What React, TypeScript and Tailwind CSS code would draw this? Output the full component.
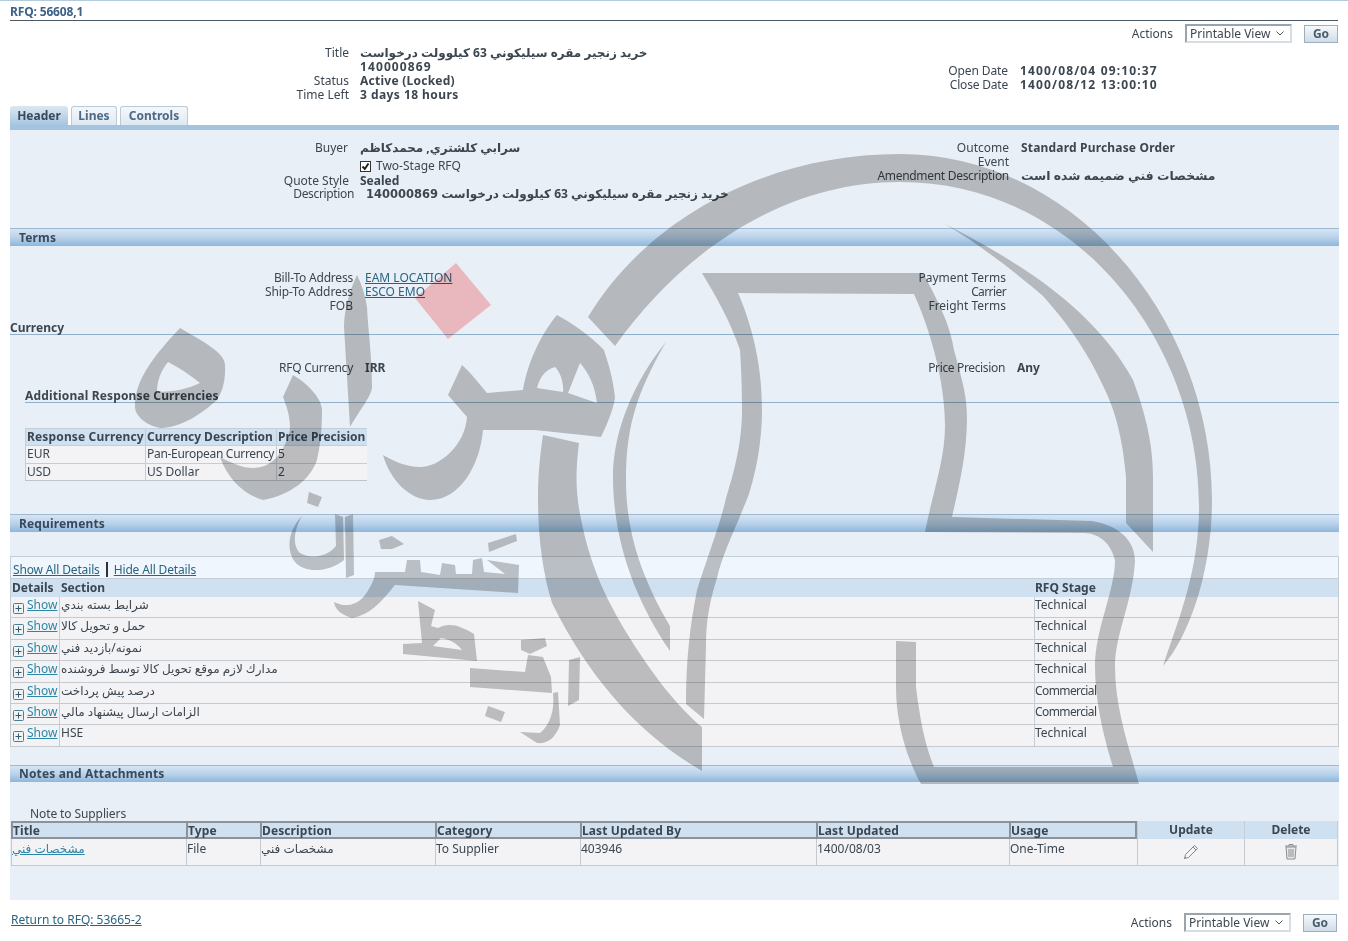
import React from 'react';

const detailRows = [
  { section: 'شرايط بسته بندي', stage: 'Technical' },
  { section: 'حمل و تحويل كالا', stage: 'Technical' },
  { section: 'نمونه/بازديد فني', stage: 'Technical' },
  { section: 'مدارك لازم موقع تحويل كالا توسط فروشنده', stage: 'Technical' },
  { section: 'درصد پيش پرداخت', stage: 'Commercial' },
  { section: 'الزامات ارسال پيشنهاد مالي', stage: 'Commercial' },
  { section: 'HSE', stage: 'Technical' },
];

function ActionBar({ className }: { className: string }) {
  return (
    <div className={`flex items-center ${className}`}>
      <span className="mr-[12px]">Actions</span>
      <div className="relative h-[19px] w-[107px] border-2 border-t-[#9aa4ac] border-l-[#9aa4ac] border-r-[#d8dde2] border-b-[#d8dde2] bg-white">
        <select className="h-full w-full appearance-none bg-transparent pl-[3px] text-[12px] leading-[15px] outline-none">
          <option>Printable View</option>
        </select>
        <svg className="pointer-events-none absolute right-[6px] top-[5px]" width="8" height="5" viewBox="0 0 8 5" fill="none" stroke="#555" strokeWidth="1">
          <path d="M0.5 0.5 L4 4 L7.5 0.5" />
        </svg>
      </div>
      <button className="ml-[12px] h-[18px] w-[34px] border border-[#9db0c0] bg-linear-to-b from-[#f6f9fc] to-[#cfdce8] text-[12px] font-bold leading-[15px] text-[#4a5c6c]">
        Go
      </button>
    </div>
  );
}

function SectionBar({ title, className }: { title: string; className?: string }) {
  return (
    <div className={`border-t border-[#9dbad2] bg-linear-to-b from-[#d6e5f4] via-[#b9d2ea] to-[#8eb7dc] pl-[9px] font-bold tracking-[0.15px] text-[#39495a] ${className ?? ''}`}>
      {title}
    </div>
  );
}

function PlusBox() {
  return (
    <svg className="mt-[5px] shrink-0" width="11" height="11" viewBox="0 0 11 11" fill="#eef3f6" stroke="#4d7f94" strokeWidth="1">
      <rect x="0.5" y="0.5" width="10" height="10" rx="1" />
      <path d="M2.5 5.5 H8.5 M5.5 2.5 V8.5" stroke="#39596b" />
    </svg>
  );
}

function Watermark() {
  return (
    <svg className="pointer-events-none absolute left-0 top-0 mix-blend-multiply" width="1348" height="941" viewBox="0 0 1348 941">
      <g fill="#c6c6c5">
        {/* outer ring */}
        <path d="M588 317 C650 215 770 154 900 154 C1075 154 1212 320 1212 500 C1212 570 1190 635 1163 666 C1180 615 1199 570 1199 506 C1199 340 1075 182 900 182 C780 182 680 255 615 346 Z" />
        {/* thin right crescent */}
        <path d="M945 224 C1040 272 1100 320 1133 380 C1148 420 1153 450 1153 477 L1153 552 L1126 523 L1126 477 C1122 430 1112 405 1106 392 C1085 345 1060 315 1043 296 C1015 272 980 245 945 224 Z" />
        {/* ribbon */}
        <path d="M702 273 L923 273 C940 305 950 325 954 350 C962 380 967 395 967 418 C967 455 958 490 952 517 L1092 521 C1118 525 1135 540 1135 561 C1133 600 1115 635 1115 666 C1115 710 1130 750 1139 784 L921 784 C905 755 896 720 896 687 L896 641 L916 642 L916 687 C920 720 925 745 934 767 L1113 767 C1103 735 1095 700 1095 666 C1095 630 1115 590 1115 561 C1112 545 1100 533 1084 533 L925 532 C932 495 945 460 945 426 C945 380 930 330 914 294 L738 293 C752 325 762 365 762 409 C762 445 755 475 749 494 C735 530 722 555 717 578 C710 600 706 620 706 645 L704 719 L686 704 C686 660 690 625 697 590 C708 555 720 525 726 498 C738 460 742 435 742 409 C742 385 741 365 740 350 C730 320 715 295 702 273 Z" />
        {/* big left crescent */}
        <path d="M543 435 L579 443 C575 475 576 495 581 519 C590 565 605 595 619 620 C645 665 675 705 702 727 L702 771 C640 735 590 680 552 603 C542 570 538 535 538 498 C538 475 540 455 543 435 Z" />
        {/* thin inner crescent */}
        <path d="M666 342 C635 395 626 430 626 480 C626 530 640 575 670 626 L670 651 C635 600 613 540 613 477 C613 430 635 380 666 342 Z" />
        {/* logo lettering */}
        <path fillRule="evenodd" d="M180 328 C200 340 225 352 225 365 C226 385 220 395 217 400 C195 420 175 428 160 428 C145 425 135 415 135 407 C135 385 145 365 180 328 Z M168 362 C160 372 157 382 157 392 C175 392 190 388 200 383 C190 375 180 368 168 362 Z" />
        <path d="M357 275 C350 290 344 310 344 327 L350 427 C360 410 372 395 372 387 C372 355 368 330 367 307 C365 295 362 285 357 275 Z" />
        <path d="M293 375 C310 385 322 400 322 410 C322 440 318 455 317 460 C310 480 290 495 263 500 C245 495 228 480 220 457 C235 465 245 468 253 468 C265 468 272 462 277 457 C286 445 290 435 290 427 C290 415 286 405 283 397 Z" />
        <path d="M309 492 L322 497 L318 507 L307 503 Z" />
        <path fillRule="evenodd" d="M462 365 L448 395 L467 417 C465 445 440 467 420 467 C405 467 392 460 383 455 C390 480 410 500 430 500 C460 500 480 465 483 430 L535 430 L601 437 C612 415 615 400 615 397 C612 370 605 355 604 350 C590 335 570 322 557 315 C540 335 527 365 523 390 L487 393 C478 382 470 372 462 365 Z M555 367 C545 370 540 377 537 388 L563 392 C564 382 560 372 555 367 Z M580 363 L568 393 L597 403 C595 385 588 372 580 363 Z" />
        <path d="M456 263 L491 305 L448 339 L415 298 Z" fill="#ffc5c5" />
        {/* gostaran */}
        <path d="M302 516 C294 530 292 545 300 553 C312 560 328 556 336 546 L335 514 L343 517 L344 560 C330 572 305 574 295 562 C286 550 288 530 302 516 Z" />
        <path d="M345 517 L353 514 L354 575 L346 578 Z" />
        <path d="M375 572 L405 572 L407 560 L420 560 L421 572 L440 575 L442 563 L455 565 L456 574 L472 574 L473 560 L482 558 L484 572 L505 574 L487 560 L519 565 L518 593 L395 585 C385 597 372 615 352 618 C342 615 335 610 334 602 C345 608 358 605 365 595 C372 585 375 578 375 572 Z" />
        <path d="M488 543 L516 534 L517 541 L489 552 Z" />
        <path d="M379 540 L392 536 L404 544 L392 549 L381 549 Z" />
        {/* ertebat */}
        <path fillRule="evenodd" d="M418 601 L435 610 L431 626 L438 628 C448 622 460 625 474 634 L477 661 L403 654 L403 644 L422 643 Z M441 638 L433 646 L462 650 C456 642 448 639 441 638 Z" />
        <path d="M470 668 L525 672 L528 655 L543 657 L551 677 L552 693 L470 687 Z" />
        <path d="M521 640 L545 638 L547 646 L530 654 L521 650 Z" />
        <path d="M569 660 L580 657 L579 700 L568 706 Z" />
        <path d="M553 693 L558 692 L560 725 C555 740 545 744 537 743 L520 732 L540 733 C550 725 555 710 553 693 Z" />
        <path d="M488 706 L505 712 L501 722 L485 716 Z" />
      </g>
    </svg>
  );
}

export default function App() {
  return (
    <div
      className="relative h-[941px] w-[1348px] overflow-hidden bg-white text-[12px] leading-[14px] text-[#3c4650]"
      style={{ fontFamily: '"Noto Sans", "DejaVu Sans", sans-serif' }}
    >
      <div className="h-[1px] bg-[#b4cbdb]" />

      {/* Page header */}
      <div className="mx-[10px] h-[20px] border-b border-[#4c5a68] pt-[4px] font-bold tracking-[-0.15px] text-[#3d6288]">RFQ: 56608,1</div>
      <ActionBar className="mt-[3px] h-[19px] justify-end pr-[10px]" />

      <div className="mt-[2px] flex h-[61px]">
        <div className="grid w-[680px] grid-cols-[349px_auto] content-start gap-x-[11px] pt-[1px]">
          <div className="text-right">Title</div>
          <div className="font-bold">
            <div>خريد زنجير مقره سيليكوني 63 كيلوولت درخواست</div>
            <div className="tracking-[1.1px]">140000869</div>
          </div>
          <div className="text-right">Status</div>
          <div className="font-bold tracking-[0.25px]">Active (Locked)</div>
          <div className="text-right">Time Left</div>
          <div className="font-bold tracking-[0.45px]">3 days 18 hours</div>
        </div>
        <div className="mt-[19px] grid grid-cols-[328px_auto] content-start gap-x-[12px]">
          <div className="text-right tracking-[-0.1px]">Open Date</div>
          <div className="font-bold tracking-[1.15px]">1400/08/04 09:10:37</div>
          <div className="text-right tracking-[-0.2px]">Close Date</div>
          <div className="font-bold tracking-[1.15px]">1400/08/12 13:00:10</div>
        </div>
      </div>

      {/* Tabs */}
      <div className="flex h-[19px] gap-[3px] pl-[10px] font-bold leading-[18px]">
        <div className="w-[58px] rounded-t-[3px] bg-linear-to-b from-[#dbe8f3] to-[#a6c6e0] text-center leading-[20px] text-[#39495a]">Header</div>
        <div className="w-[46px] rounded-t-[3px] border border-b-0 border-[#bccad6] bg-linear-to-b from-[#f4f8fb] to-[#dfe9f2] text-center text-[#4a6a88]">Lines</div>
        <div className="w-[68px] rounded-t-[3px] border border-b-0 border-[#bccad6] bg-linear-to-b from-[#f4f8fb] to-[#dfe9f2] text-center text-[#4a6a88]">Controls</div>
      </div>
      <div className="mx-[10px] h-[5px] w-[1329px] bg-[#a3c3de]" />

      <div className="ml-[10px] h-[770px] w-[1329px] bg-[#e9eff6]">
        {/* Header details */}
        <div className="flex h-[98px] pt-[11px]">
          <div className="w-[660px]">
            <div className="grid grid-cols-[338px_auto] gap-x-[12px]">
              <div className="text-right">Buyer</div>
              <div className="font-bold">سرابي كلشتري, محمدكاظم</div>
            </div>
            <div className="mt-[4px] flex h-[14px] items-center pl-[350px]">
              <svg width="11" height="11" viewBox="0 0 11 11" fill="#fff" stroke="#333" strokeWidth="1">
                <rect x="0.5" y="0.5" width="10" height="10" />
                <path d="M2.5 5.5 L4.8 8 L8.5 2.5" fill="none" strokeWidth="2" stroke="#222" />
              </svg>
              <span className="ml-[5px]">Two-Stage RFQ</span>
            </div>
            <div className="mt-[1px] grid h-[13px] grid-cols-[339px_auto] gap-x-[11px] leading-[13px]">
              <div className="text-right">Quote Style</div>
              <div className="font-bold">Sealed</div>
            </div>
            <div className="grid grid-cols-[344px_auto] gap-x-[12px]">
              <div className="text-right tracking-[-0.35px]">Description</div>
              <div className="whitespace-nowrap font-bold">
                خريد زنجير مقره سيليكوني 63 كيلوولت درخواست{' '}
                <span className="font-['DejaVu_Sans'] text-[11.5px]">140000869</span>
              </div>
            </div>
          </div>
          <div className="grid grid-cols-[339px_auto] content-start gap-x-[12px]">
            <div className="text-right">Outcome</div>
            <div className="font-bold tracking-[0.18px]">Standard Purchase Order</div>
            <div className="text-right">Event</div>
            <div />
            <div className="text-right tracking-[-0.3px]">Amendment Description</div>
            <div className="text-[12.4px] font-bold">مشخصات فني ضميمه شده است</div>
          </div>
        </div>

        <SectionBar title="Terms" className="h-[18px] leading-[17px]" />

        {/* Terms */}
        <div className="mt-[25px] flex h-[41px]">
          <div className="grid w-[660px] grid-cols-[343px_auto] content-start gap-x-[12px]">
            <div className="text-right tracking-[-0.2px]">Bill-To Address</div>
            <a className="text-[#2a6580] underline">EAM LOCATION</a>
            <div className="text-right tracking-[-0.1px]">Ship-To Address</div>
            <a className="text-[#2a6580] underline">ESCO EMO</a>
            <div className="text-right">FOB</div>
            <div />
          </div>
          <div className="w-[336px] text-right">
            <div>Payment Terms</div>
            <div className="tracking-[-0.6px]">Carrier</div>
            <div>Freight Terms</div>
          </div>
        </div>

        <div className="mt-[8px] h-[15px] border-b border-[#8fb0c8] pt-[1px] font-bold">Currency</div>

        <div className="mt-[26px] flex h-[14px]">
          <div className="grid w-[660px] grid-cols-[343px_auto] gap-x-[12px]">
            <div className="text-right tracking-[-0.25px]">RFQ Currency</div>
            <div className="font-bold">IRR</div>
          </div>
          <div className="grid grid-cols-[335px_auto] gap-x-[12px]">
            <div className="text-right tracking-[-0.35px]">Price Precision</div>
            <div className="font-bold">Any</div>
          </div>
        </div>

        <div className="ml-[15px] mt-[13px] h-[15px] border-b border-[#8fb0c8] pt-[1px] font-bold tracking-[0.15px]">Additional Response Currencies</div>

        <div className="ml-[15px] mt-[25px] grid w-[342px] grid-cols-[120px_131px_91px] border-b border-r border-[#bcc6ce] [&>div]:h-[17.33px] [&>div]:whitespace-nowrap [&>div]:border-l [&>div]:border-t [&>div]:border-[#c4ced6] [&>div]:pl-[1px] [&>div]:pt-[1px]">
          <div className="bg-[#cfe0f0] font-bold tracking-[0.15px]">Response Currency</div>
          <div className="bg-[#cfe0f0] font-bold">Currency Description</div>
          <div className="bg-[#cfe0f0] font-bold">Price Precision</div>
          <div className="bg-[#f3f3f6]">EUR</div>
          <div className="bg-[#f3f3f6] tracking-[-0.3px]">Pan-European Currency</div>
          <div className="bg-[#f3f3f6]">5</div>
          <div className="bg-[#f3f3f6]">USD</div>
          <div className="bg-[#f3f3f6]">US Dollar</div>
          <div className="bg-[#f3f3f6]">2</div>
        </div>

        <SectionBar title="Requirements" className="mt-[33px] h-[18px] leading-[17px]" />

        {/* Requirements */}
        <div className="mt-[24px]">
          <div className="flex h-[22px] items-end border-x border-t border-[#c4ced6] bg-[#eff6fe] pb-[1px] pl-[2px]">
            <a className="tracking-[-0.15px] text-[#2a6580] underline">Show All Details</a>
            <span className="mx-[6px] h-[15px] border-l-2 border-[#333]" />
            <a className="tracking-[-0.15px] text-[#2a6580] underline">Hide All Details</a>
          </div>
          <div className="grid h-[19px] grid-cols-[49px_974px_1fr] border-x border-t border-[#c4ced6] bg-[#cfe0f0] font-bold leading-[18px]">
            <div className="pl-[1px]">Details</div>
            <div className="pl-[1px]">Section</div>
            <div className="pl-[1px]">RFQ Stage</div>
          </div>
          {detailRows.map((row, i) => (
            <div key={i} className="grid h-[21.4px] grid-cols-[49px_974px_1fr] border-x border-b border-[#c4cad0] bg-[#f3f3f6]">
              <div className="flex gap-[3px] border-r border-[#c4ced6] pl-[2px] pt-[1px]">
                <PlusBox />
                <a className="text-[#2b86a8] underline">Show</a>
              </div>
              <div className="pl-[1px] pt-[1px]">{row.section}</div>
              <div className={`border-l border-[#c4ced6] pt-[1px] ${row.stage === 'Commercial' ? 'tracking-[-0.6px]' : ''}`}>{row.stage}</div>
            </div>
          ))}
        </div>

        <SectionBar title="Notes and Attachments" className="mt-[18px] h-[17px] leading-[16px]" />

        {/* Notes */}
        <div className="ml-[20px] mt-[24px] h-[15px] pt-[1px] tracking-[-0.1px]">Note to Suppliers</div>
        <div className="ml-[1px] grid w-[1327px] grid-cols-[175px_74px_175px_145px_236px_193px_128px_107px_94px]">
          {['Title', 'Type', 'Description', 'Category', 'Last Updated By', 'Last Updated', 'Usage'].map((h, i) => (
            <div key={i} className={`h-[18px] border-y-2 border-l-2 border-[#8b9299] bg-[#cfe0f0] font-bold leading-[15px] tracking-[0.1px] ${i === 6 ? 'border-r-2' : ''}`}>
              {h}
            </div>
          ))}
          <div className="h-[18px] border-l border-[#c4ced6] bg-[#cfe0f0] text-center font-bold leading-[17px]">Update</div>
          <div className="h-[18px] border-x border-[#c4ced6] bg-[#cfe0f0] text-center font-bold leading-[17px]">Delete</div>
          <div className="h-[27px] border-b border-l border-[#c4cad0] bg-[#f3f3f6] pt-[3px]">
            <a className="text-[#2b86a8] underline">مشخصات فني</a>
          </div>
          <div className="h-[27px] border-b border-l border-[#c4cad0] bg-[#f3f3f6] pt-[3px]">File</div>
          <div className="h-[27px] border-b border-l border-[#c4cad0] bg-[#f3f3f6] pt-[3px]">مشخصات فني</div>
          <div className="h-[27px] border-b border-l border-[#c4cad0] bg-[#f3f3f6] pt-[3px]">To Supplier</div>
          <div className="h-[27px] border-b border-l border-[#c4cad0] bg-[#f3f3f6] pt-[3px]">403946</div>
          <div className="h-[27px] border-b border-l border-[#c4cad0] bg-[#f3f3f6] pt-[3px]">1400/08/03</div>
          <div className="h-[27px] border-b border-l border-[#c4cad0] bg-[#f3f3f6] pt-[3px]">One-Time</div>
          <div className="flex h-[27px] items-center justify-center border-b border-l border-[#c4cad0] bg-[#f3f3f6]">
            <svg width="16" height="16" viewBox="0 0 16 16" fill="#f4f4f4" stroke="#808890" strokeWidth="1">
              <path d="M1.5 14.5 L2.5 10.5 L11.5 1.5 L14.5 4.5 L5.5 13.5 Z" />
              <path d="M10 3 L13 6 M1.5 14.5 L3 13" />
            </svg>
          </div>
          <div className="flex h-[27px] items-center justify-center border-x border-b border-[#c4cad0] bg-[#f3f3f6]">
            <svg width="14" height="17" viewBox="0 0 14 17" fill="#e8e8e8" stroke="#8a8f94" strokeWidth="1">
              <path d="M1 3 H13 M5 3 V1.5 H9 V3" fill="none" />
              <path d="M2 4 L3 16 H11 L12 4 Z" />
              <path d="M5 6 V14 M7 6 V14 M9 6 V14" fill="none" />
            </svg>
          </div>
        </div>
      </div>

      {/* Footer */}
      <div className="mt-[13px] flex h-[19px] items-start justify-between pl-[11px] pr-[11px]">
        <a className="text-[#2a6580] underline">Return to RFQ: 53665-2</a>
        <ActionBar className="" />
      </div>

      <Watermark />
    </div>
  );
}
